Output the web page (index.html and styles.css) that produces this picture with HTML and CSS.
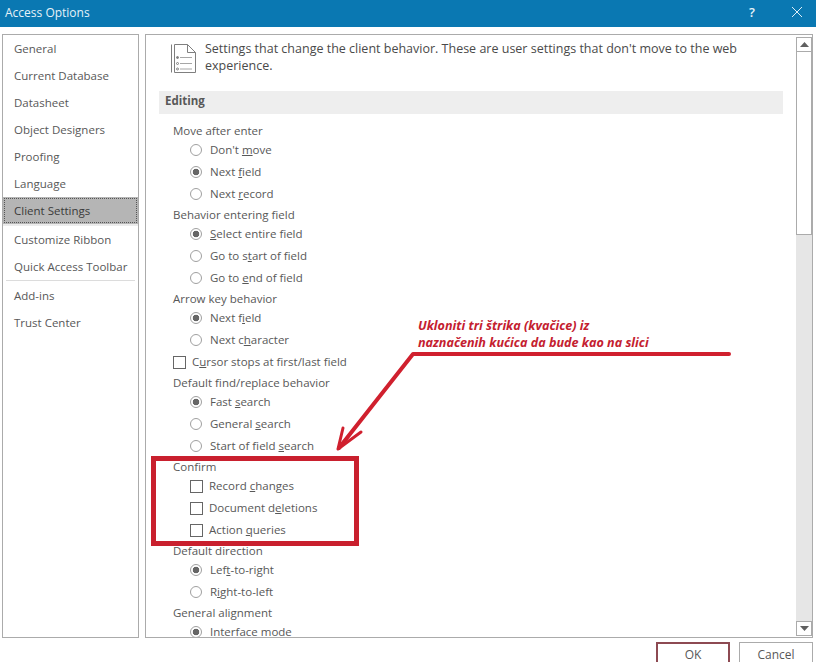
FILE: index.html
```html
<!DOCTYPE html>
<html lang="en">
<head>
<meta charset="utf-8">
<title>Access Options</title>
<link rel="stylesheet" href="styles.css">
</head>
<body>
<div class="dialog">
  <header class="titlebar">
    <span class="title">Access Options</span>
    <span class="help">?</span>
    <svg class="close" width="10" height="10" viewBox="0 0 10 10"><path d="M0 0l10 10M10 0L0 10" stroke="#dceef7" stroke-width="1" fill="none"/></svg>
  </header>
  <div class="body">
    <nav class="sidebar">
      <div class="nav">General</div>
      <div class="nav">Current Database</div>
      <div class="nav">Datasheet</div>
      <div class="nav">Object Designers</div>
      <div class="nav">Proofing</div>
      <div class="nav">Language</div>
      <div class="nav selected"><span>Client Settings</span></div>
      <div class="nav after-sel">Customize Ribbon</div>
      <div class="nav">Quick Access Toolbar</div>
      <div class="sep"></div>
      <div class="nav">Add-ins</div>
      <div class="nav">Trust Center</div>
    </nav>
    <main class="panel">
      <div class="content">
        <div class="intro">
          <svg class="doc" width="26" height="32" viewBox="0 0 26 32" fill="none" stroke="#7f7f7f" stroke-width="1">
            <path d="M.5 1.5v28M3.5 29.500h21V9.500l-8-8h-13v28M16.500 1.500v8h8"/>
            <path d="M9 14.500h12M9 20.500h12M9 26h12" stroke="#a6a6a6"/>
            <circle cx="6.500" cy="14.500" r="1" fill="#7f7f7f"/><circle cx="6.500" cy="20.500" r="1"/><circle cx="6.500" cy="26" r="1"/>
          </svg>
          <p>Settings that change the client behavior. These are user settings that don't move to the web experience.</p>
        </div>
        <h2 class="section">Editing</h2>
        <div class="label">Move after enter</div>
        <div class="opt"><i class="radio"></i>Don't <u>m</u>ove</div>
        <div class="opt"><i class="radio on"></i>Next <u>f</u>ield</div>
        <div class="opt"><i class="radio"></i>Next <u>r</u>ecord</div>
        <div class="label">Behavior entering field</div>
        <div class="opt"><i class="radio on"></i><u>S</u>elect entire field</div>
        <div class="opt"><i class="radio"></i>Go to s<u>t</u>art of field</div>
        <div class="opt"><i class="radio"></i>Go to <u>e</u>nd of field</div>
        <div class="label">Arrow key behavior</div>
        <div class="opt"><i class="radio on"></i>Next f<u>i</u>eld</div>
        <div class="opt"><i class="radio"></i>Next c<u>h</u>aracter</div>
        <div class="opt top"><i class="check"></i>C<u>u</u>rsor stops at first/last field</div>
        <div class="label">Default find/replace behavior</div>
        <div class="opt"><i class="radio on"></i>Fast <u>s</u>earch</div>
        <div class="opt"><i class="radio"></i>General <u>s</u>earch</div>
        <div class="opt"><i class="radio"></i>Start of field <u>s</u>earch</div>
        <div class="label">Confirm</div>
        <div class="opt"><i class="check"></i>Record <u>c</u>hanges</div>
        <div class="opt"><i class="check"></i>Document d<u>e</u>letions</div>
        <div class="opt"><i class="check"></i>Action <u>q</u>ueries</div>
        <div class="label">Default direction</div>
        <div class="opt"><i class="radio on"></i>Lef<u>t</u>-to-right</div>
        <div class="opt"><i class="radio"></i>R<u>i</u>ght-to-left</div>
        <div class="label">General alignment</div>
        <div class="opt"><i class="radio on"></i>Interface mode</div>
      </div>
      <div class="scrollbar">
        <div class="sb-btn"><svg width="9" height="5" viewBox="0 0 9 5"><path d="M4.500 0L9 5H0z" fill="#606060"/></svg></div>
        <div class="sb-thumb"></div>
        <div class="sb-track"></div>
        <div class="sb-btn"><svg width="9" height="5" viewBox="0 0 9 5"><path d="M0 0h9L4.500 5z" fill="#606060"/></svg></div>
      </div>
    </main>
  </div>
  <footer class="footer">
    <button class="btn ok">OK</button>
    <button class="btn">Cancel</button>
  </footer>
</div>
<svg class="markup" width="816" height="662" viewBox="0 0 816 662" fill="none" stroke="#d0202e">
  <path d="M729 354H413L339 448" stroke-width="4" stroke-linecap="round" stroke-linejoin="round"/>
  <path d="M338 449l5-21M338 449l23-17" stroke-width="3" stroke-linecap="round"/>
  <rect x="153.500" y="458.500" width="203" height="85" stroke-width="5" stroke="#c9202e"/>
</svg>
<div class="note">Ukloniti tri štrika (kvačice) iz<br>naznačenih kućica da bude kao na slici</div>
</body>
</html>
```
FILE: styles.css
```css
* { box-sizing: border-box; }
html, body { margin: 0; height: 662px; overflow: hidden; background: #fff; }
body { position: relative; font-family: "Open Sans", "Noto Sans", sans-serif; font-size: 11.5px; color: #585858; }
.dialog { display: flex; flex-direction: column; height: 662px; overflow: hidden; }
.titlebar { height: 27px; flex: none; background: #0a78b2; color: #e6f2f8; display: flex; align-items: center; padding: 0 14px 3px 5px; font-size: 12px; }
.title { flex: 1; }
.help { font-size: 13px; font-weight: 600; margin-right: 37px; }
.body { display: flex; gap: 6px; height: 604px; margin-top: 7px; padding: 0 3px 0 2px; flex: none; }
.sidebar { width: 137px; flex: none; border: 1px solid #ababab; }
.nav { height: 27px; padding-left: 11px; line-height: 27px; }
.selected { background: #b5b5b5; color: #3a3a3a; height: 27px; padding: 1px; margin-bottom: 2px; box-shadow: 0 2px 0 #ececec; line-height: 24px; }
.selected span { display: block; height: 25px; padding-left: 9px; border: 1px dotted #555; }
.sep { height: 1px; background: #dcdcdc; margin: 0 3px 1px; }
.panel { flex: 1; display: flex; border: 1px solid #ababab; overflow: hidden; min-width: 0; }
.content { flex: 1; min-width: 0; height: 100%; overflow: hidden; padding-left: 13px; padding-right: 13px; }
.intro { display: flex; height: 56px; padding: 8px 0 0 12px; gap: 8px; font-size: 12.5px; line-height: 17px; }
.doc { flex: none; }
.intro p { margin: -3px 0 0; color: #4a4a4a; }
.section { margin: 0 0 9px; height: 23px; line-height: 20px; background: #eeeeee; padding-left: 6px; font-size: 11.5px; font-weight: 700; color: #585858; }
.label { height: 16px; line-height: 16px; margin: 2px 0 0 14px; }
.opt { height: 22px; line-height: 22px; display: flex; align-items: center; margin-left: 31px; white-space: pre; }
.opt u { text-underline-offset: 1px; }
.opt.top { margin-left: 14px; }
.radio { width: 12px; height: 12px; flex: none; margin-right: 8px; border: 1px solid #a0a0a0; border-radius: 50%; background: #fff; }
.radio.on { background: radial-gradient(circle, #666 0 3px, #fff 3.600px); }
.check { width: 13px; height: 13px; flex: none; margin-right: 6px; border: 1px solid #666; background: #fff; }
.scrollbar { width: 16px; flex: none; display: flex; flex-direction: column; margin: 2px 0 1px; }
.sb-btn { height: 15px; flex: none; border: 1px solid #ababab; background: #fff; display: flex; align-items: center; justify-content: center; }
.sb-thumb { height: 183px; flex: none; border: 1px solid #ababab; border-top: 0; background: #fff; }
.sb-track { flex: 1; background: #e6e6e6; }
.footer { flex: none; display: flex; gap: 9px; justify-content: flex-end; padding: 4px 3px 0 0; }
.btn { width: 74px; height: 24px; background: #fff; border: 1px solid #ababab; font: inherit; font-size: 12px; color: #585858; padding: 0; }
.ok { border: 2px solid #8d4a52; }
.markup { position: absolute; left: 0; top: 0; pointer-events: none; }
.note { position: absolute; left: 418px; top: 317px; font-size: 12.6px; line-height: 17px; font-weight: 700; font-style: italic; color: #c4202f; white-space: nowrap; }
```
